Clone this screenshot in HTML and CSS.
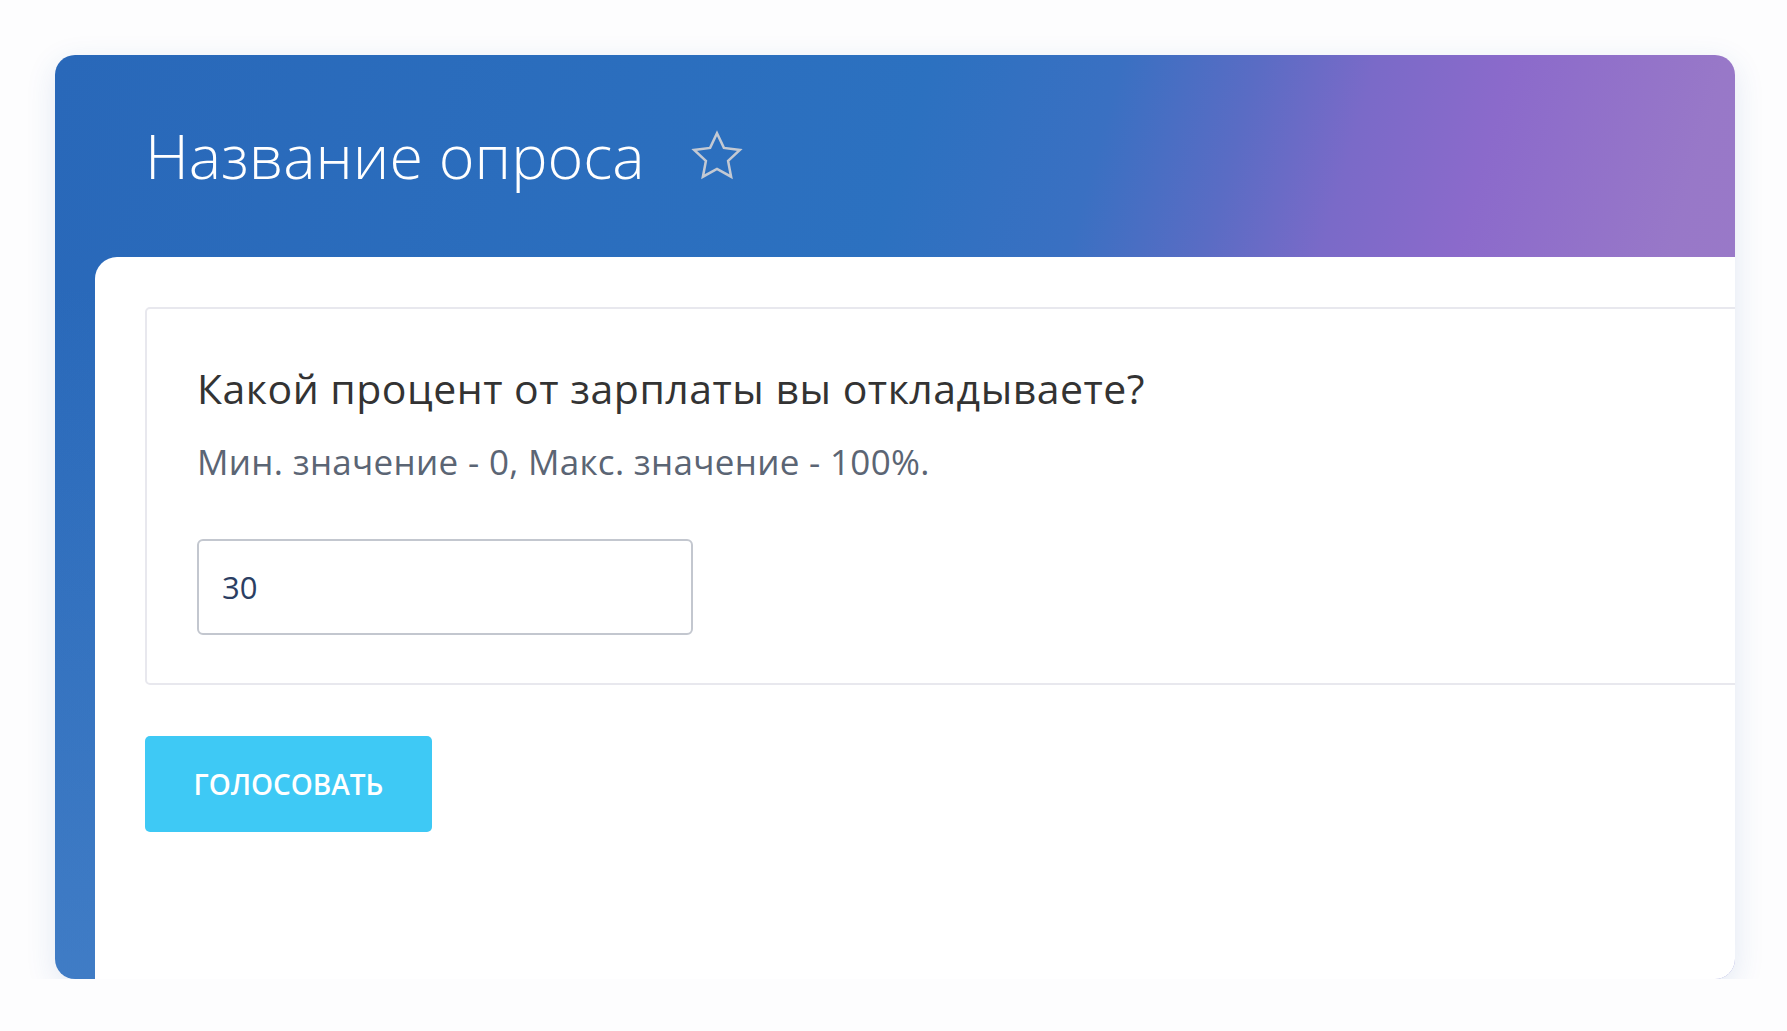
FILE: index.html
```html
<!DOCTYPE html>
<html lang="ru">
<head>
    <meta charset="UTF-8">
    <meta name="viewport" content="width=device-width, initial-scale=1.0">
    <title>Название опроса</title>
    <link rel="stylesheet" href="styles.css">
</head>
<body>
    <div class="poll-card">
        <div class="poll-header">
            <h1 class="poll-title">Название опроса</h1>
            <span class="fav-btn">
                <svg viewBox="0 0 24 24" width="60" height="58">
                    <path d="M12 2.6l2.85 6.05 6.6.82-4.86 4.55 1.25 6.55L12 17.35l-5.84 3.22 1.25-6.55L2.55 9.47l6.6-.82z" fill="none" stroke="#c3c9d3" stroke-width="1.05" stroke-linejoin="miter"/>
                </svg>
            </span>
        </div>

        <div class="poll-body">
            <div class="question">
                <div class="question-title">Какой процент от зарплаты вы откладываете?</div>
                <div class="question-hint">Мин. значение - 0, Макс. значение - 100%.</div>
                <input type="text" class="answer-input" value="30">
            </div>

            <button type="button" class="vote-btn">Голосовать</button>
        </div>
    </div>
</body>
</html>
```

FILE: styles.css
```css
body {
    font-family: "Open Sans", "Noto Sans", sans-serif;
    background-color: #fdfdfe;
    margin: 0;
    padding: 55px 0 0 55px;
}

.poll-card {
    width: 1680px;
    height: 924px;
    display: flex;
    flex-direction: column;
    border-radius: 20px;
    overflow: hidden;
    box-shadow: 0 8px 30px rgba(40, 90, 170, 0.13);
    background:
        linear-gradient(to bottom, rgba(90, 145, 210, 0) 25%, rgba(90, 145, 210, 0.45) 100%),
        linear-gradient(106deg, #2968b9 0%, #2c71c0 45%, #3a70c2 55%, #5a6cc4 62%, #7a6ac8 68%, #8b6acb 75%, #9878c8 86%, #9c7ac8 100%);
}

.poll-header {
    height: 202px;
    flex-shrink: 0;
    display: flex;
    align-items: center;
    padding-left: 90px;
    box-sizing: border-box;
}

.poll-title {
    margin: 0;
    font-size: 61px;
    font-weight: 300;
    color: #fff;
    line-height: 1.2;
}

.fav-btn {
    display: flex;
    margin-left: 42px;
    margin-top: 0;
    cursor: pointer;
}

.poll-body {
    flex: 1;
    margin-left: 40px;
    padding: 50px 0 0 50px;
    background-color: #fff;
    border-top-left-radius: 22px;
}

.question {
    margin-right: -20px;
    padding: 55px 50px 48px 50px;
    border: 2px solid #e8e8ee;
    border-radius: 5px;
}

.question-title {
    font-size: 41px;
    letter-spacing: 0.5px;
    line-height: 1.2;
    color: #333;
}

.question-hint {
    margin-top: 28px;
    font-size: 35px;
    letter-spacing: 0.3px;
    line-height: 1.2;
    color: #5b6574;
}

.answer-input {
    display: block;
    margin-top: 56px;
    width: 496px;
    height: 96px;
    box-sizing: border-box;
    padding: 0 23px;
    border: 2px solid #c3c7cf;
    border-radius: 6px;
    font-family: inherit;
    font-size: 31px;
    color: #2b3e63;
    outline: none;
}

.vote-btn {
    margin-top: 51px;
    width: 287px;
    height: 96px;
    border: none;
    border-radius: 5px;
    background-color: #3ec9f5;
    color: #fff;
    font-family: inherit;
    font-size: 28px;
    font-weight: 600;
    text-transform: uppercase;
    cursor: pointer;
}
```
